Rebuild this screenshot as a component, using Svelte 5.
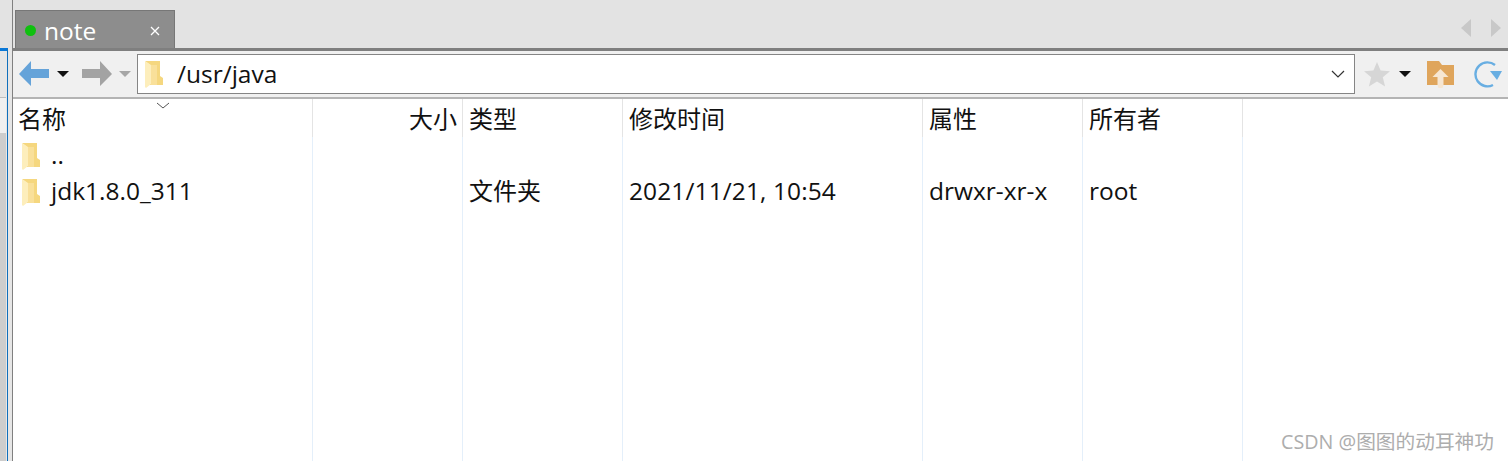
<script lang="ts">
  const columns = [
    { label: "名称", width: 300 },
    { label: "大小", width: 150, right: true },
    { label: "类型", width: 160 },
    { label: "修改时间", width: 300 },
    { label: "属性", width: 160 },
    { label: "所有者", width: 160 },
  ];
  const rows = [
    { name: "..", cells: ["", "", "", "", ""] },
    { name: "jdk1.8.0_311", cells: ["", "文件夹", "2021/11/21, 10:54", "drwxr-xr-x", "root"] },
  ];
</script>

{#snippet folder()}
  <svg class="folder" width="18" height="27" viewBox="0 0 18 27" aria-hidden="true">
    <path d="M0 0h15v15l3 2v7H5V4z" fill="#f5d77f" />
    <path d="M6 4h6v20H6z" fill="#f9e09a" />
    <path d="M0 0l6 4v19l-5 4-1-1z" fill="#fdeebc" />
  </svg>
{/snippet}

<div class="window">
  <div class="left-edge">
    <div class="edge-top"></div>
    <div class="edge-blue">
      <div class="strip"></div>
      <div class="strip-light"></div>
      <div class="strip-dark"></div>
    </div>
  </div>
  <div class="main">
    <div class="tabbar">
      <div class="tab">
        <span class="dot"></span>
        <span class="tab-name">note</span>
        <svg class="tab-close" width="10" height="10" viewBox="0 0 10 10" aria-hidden="true">
          <path d="M1 1l8 8M9 1l-8 8" stroke="#fff" stroke-width="1.3" />
        </svg>
      </div>
      <div class="tab-arrows">
        <svg width="12" height="20" viewBox="0 0 12 20" aria-hidden="true"><path d="M11 1v18L1 10z" fill="#c8c8c8" /></svg>
        <svg width="12" height="20" viewBox="0 0 12 20" aria-hidden="true"><path d="M1 1v18l10-9z" fill="#c8c8c8" /></svg>
      </div>
    </div>
    <div class="toolbar">
      <svg class="nav" width="31" height="26" viewBox="0 0 31 26" aria-hidden="true">
        <path d="M12 0L0 13l12 12v-8h18V8H12z" fill="#65a3d9" />
      </svg>
      <span class="caret dark"></span>
      <svg class="nav fwd" width="31" height="26" viewBox="0 0 31 26" aria-hidden="true">
        <path d="M18 0l12 13-12 12v-8H0V8h18z" fill="#a3a3a3" />
      </svg>
      <span class="caret light"></span>
      <div class="path">
        {@render folder()}
        <span class="path-text">/usr/java</span>
        <svg class="chev" width="14" height="8" viewBox="0 0 14 8" aria-hidden="true">
          <path d="M1 1l6 6 6-6" fill="none" stroke="#333" stroke-width="1.2" />
        </svg>
      </div>
      <svg class="star" width="28" height="26" viewBox="0 0 28 26" aria-hidden="true">
        <path d="M14 1l3.600 8.600 9.400.7-7.200 6 2.300 9.100L14 20.500 5.900 25.400l2.300-9.100-7.200-6 9.400-.7z" fill="#d6d6d6" />
      </svg>
      <span class="caret dark star-caret"></span>
      <svg class="up" width="29" height="28" viewBox="0 0 29 28" aria-hidden="true">
        <path d="M1 1h12l3 4h12v20H1z" fill="#dfa55c" />
        <path d="M14.500 9l8 8h-5v8l-1 3h-4l-1-3v-8h-5z" fill="#f6e6d2" />
      </svg>
      <svg class="refresh" width="33" height="28" viewBox="0 0 33 28" aria-hidden="true">
        <path d="M22 25a12 12 0 1 1 2-20" fill="none" stroke="#68aee2" stroke-width="2.400" />
        <path d="M19 11h12l-5 9z" fill="#68aee2" />
      </svg>
    </div>
    <div class="list">
      <span class="sort">
        <svg width="14" height="7" viewBox="0 0 14 7" aria-hidden="true"><path d="M1 1l6 5 6-5" fill="none" stroke="#555" /></svg>
      </span>
      <div class="header">
        {#each columns as c}
          <div class="cell head-cell" class:right={c.right} style="width:{c.width}px">{c.label}</div>
        {/each}
      </div>
      <div class="row">
        <div class="cell name" style="width:300px">{@render folder()}<span>{rows[0].name}</span></div>
      </div>
      <div class="row">
        <div class="cell name" style="width:300px">{@render folder()}<span>{rows[1].name}</span></div>
        {#each rows[1].cells as text, i}
          <div class="cell" style="width:{columns[i + 1].width}px">{text}</div>
        {/each}
      </div>
      <div class="guides">
        {#each columns as c}
          <div class="guide" style="width:{c.width}px"></div>
        {/each}
      </div>
      <div class="mark">CSDN @图图的动耳神功</div>
    </div>
  </div>
</div>

<style>
  :global(body) { margin: 0; background: #fff; }
  .window {
    width: 1508px; height: 461px; display: flex; overflow: hidden; background: #fff;
    font-family: "Open Sans", "Noto Sans CJK SC", sans-serif; color: #111;
  }
  .left-edge { width: 13px; flex: none; background: #e6e6e6; border-right: 1px solid #808080; box-sizing: border-box; }
  .edge-top { height: 48px; background: #e3e3e3; }
  .edge-blue {
    height: 413px; width: 8px; box-sizing: border-box; background: #e6e6e6;
    border-top: 3px solid #0a78d7; border-right: 1px solid #0f6fbc; position: relative;
  }
  .strip { height: 47px; width: 6px; background: #e6e6e6; border-bottom: 1px solid #bdbdbd; box-sizing: border-box; }
  .strip-light { height: 35px; width: 6px; background: #f0f0f0; }
  .strip-dark { height: 328px; width: 6px; background: #cdcdcd; }
  .main { flex: 1; min-width: 0; display: flex; flex-direction: column; }
  .tabbar {
    height: 51px; box-sizing: border-box; flex: none; display: flex; justify-content: space-between;
    background: #e3e3e3; border-bottom: 3px solid #7f7f7f; padding: 10px 0 0 2px;
  }
  .tab {
    width: 160px; height: 38px; box-sizing: border-box; display: flex; align-items: center;
    background: #8d8d8d; border: 1px solid #777; border-bottom: none; padding: 2px 0 0 9px; color: #fff;
  }
  .dot { width: 11px; height: 11px; border-radius: 50%; background: #0fc00f; flex: none; }
  .tab-name { font-size: 24.500px; margin: 2px 0 0 8px; line-height: 1; flex: 1; }
  .tab-close { margin-right: 14px; }
  .tab-arrows { display: flex; gap: 18px; padding: 8px 6px 0 0; }
  .toolbar {
    height: 48px; box-sizing: border-box; flex: none; display: flex; align-items: center;
    background: #f0f0f0; border-bottom: 2px solid #b4b4b4; padding: 0 0 0 6px; overflow: hidden;
  }
  .caret { width: 0; height: 0; border-left: 6px solid transparent; border-right: 6px solid transparent; border-top: 6px solid #111; margin-left: 7px; flex: none; }
  .caret.light { border-top-color: #a6a6a6; margin-left: 6px; }
  .fwd { margin-left: 13px; }
  .path {
    width: 1218px; height: 40px; box-sizing: border-box; flex: none; margin-left: 6px; display: flex; align-items: center;
    background: #fff; border: 1px solid #858585; padding: 0 9px 0 7px;
  }
  .path-text { font-size: 24.500px; margin-left: 14px; flex: 1; line-height: 1; }
  .star { margin-left: 8px; }
  .star-caret { margin-left: 8px; }
  .up { margin-left: 15px; }
  .refresh { margin-left: 16px; flex: none; }
  .list { flex: 1; position: relative; min-height: 0; }
  .sort { position: absolute; left: 143px; top: 3px; line-height: 0; }
  .header { display: flex; height: 38px; }
  .row { display: flex; height: 36px; }
  .cell {
    box-sizing: border-box; flex: none; padding: 0 6px; font-size: 24.500px; line-height: 36px; white-space: nowrap;
    position: relative; z-index: 1;
  }
  .head-cell { font-size: 24px; line-height: 38px; height: 38px; padding: 0 5px 0 6px; border-right: 1px solid #e4e4e4; font-family: "Noto Sans CJK SC", sans-serif; }
  .head-cell:first-child { padding-left: 5px; }
  .right { text-align: right; }
  .name { display: flex; align-items: center; gap: 11px; padding-left: 9px; }
  .name .folder { margin-top: 3px; }
  .row .cell:nth-child(3) { font-size: 24px; line-height: 34px; padding: 0 6px; font-family: "Noto Sans CJK SC", sans-serif; }
  .row .cell:nth-child(4) { letter-spacing: 0.1px; }
  .guides { position: absolute; left: 0; top: 38px; bottom: 0; display: flex; }
  .guide { box-sizing: border-box; border-right: 1px solid #e4effa; flex: none; }
  .mark { position: absolute; right: 14px; bottom: 6px; font-size: 19.700px; color: #adadad; z-index: 2; }
</style>
